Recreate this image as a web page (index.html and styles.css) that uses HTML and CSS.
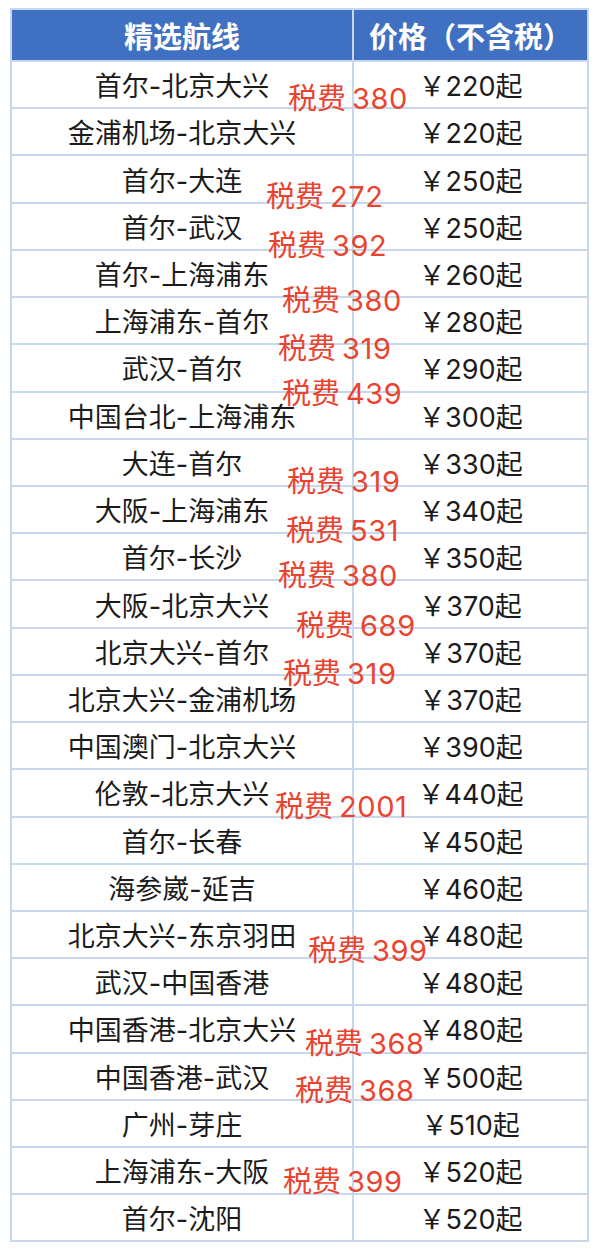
FILE: index.html
```html
<!DOCTYPE html>
<html lang="zh-CN">
<head>
<meta charset="utf-8">
<link rel="stylesheet" href="styles.css">
</head>
<body>
<div class="sheet">
  <table class="routes">
    <thead>
      <tr><th class="c1">精选航线</th><th class="c2">价格（不含税）</th></tr>
    </thead>
    <tbody>
      <tr><td>首尔-北京大兴</td><td>￥220起</td></tr>
      <tr><td>金浦机场-北京大兴</td><td>￥220起</td></tr>
      <tr><td>首尔-大连</td><td>￥250起</td></tr>
      <tr><td>首尔-武汉</td><td>￥250起</td></tr>
      <tr><td>首尔-上海浦东</td><td>￥260起</td></tr>
      <tr><td>上海浦东-首尔</td><td>￥280起</td></tr>
      <tr><td>武汉-首尔</td><td>￥290起</td></tr>
      <tr><td>中国台北-上海浦东</td><td>￥300起</td></tr>
      <tr><td>大连-首尔</td><td>￥330起</td></tr>
      <tr><td>大阪-上海浦东</td><td>￥340起</td></tr>
      <tr><td>首尔-长沙</td><td>￥350起</td></tr>
      <tr><td>大阪-北京大兴</td><td>￥370起</td></tr>
      <tr><td>北京大兴-首尔</td><td>￥370起</td></tr>
      <tr><td>北京大兴-金浦机场</td><td>￥370起</td></tr>
      <tr><td>中国澳门-北京大兴</td><td>￥390起</td></tr>
      <tr><td>伦敦-北京大兴</td><td>￥440起</td></tr>
      <tr><td>首尔-长春</td><td>￥450起</td></tr>
      <tr><td>海参崴-延吉</td><td>￥460起</td></tr>
      <tr><td>北京大兴-东京羽田</td><td>￥480起</td></tr>
      <tr><td>武汉-中国香港</td><td>￥480起</td></tr>
      <tr><td>中国香港-北京大兴</td><td>￥480起</td></tr>
      <tr><td>中国香港-武汉</td><td>￥500起</td></tr>
      <tr><td>广州-芽庄</td><td>￥510起</td></tr>
      <tr><td>上海浦东-大阪</td><td>￥520起</td></tr>
      <tr><td>首尔-沈阳</td><td>￥520起</td></tr>
    </tbody>
  </table>

  <span class="tax" style="left:288px;top:84px">税费<span class="n">380</span></span>
  <span class="tax" style="left:266px;top:182px">税费<span class="n">272</span></span>
  <span class="tax" style="left:268px;top:231px">税费<span class="n">392</span></span>
  <span class="tax" style="left:282px;top:286px">税费<span class="n">380</span></span>
  <span class="tax" style="left:278px;top:334px">税费<span class="n">319</span></span>
  <span class="tax" style="left:282px;top:379px">税费<span class="n">439</span></span>
  <span class="tax" style="left:287px;top:467px">税费<span class="n">319</span></span>
  <span class="tax" style="left:286px;top:516px">税费<span class="n">531</span></span>
  <span class="tax" style="left:278px;top:561px">税费<span class="n">380</span></span>
  <span class="tax" style="left:296px;top:611px">税费<span class="n">689</span></span>
  <span class="tax" style="left:283px;top:659px">税费<span class="n">319</span></span>
  <span class="tax" style="left:275px;top:792px">税费<span class="n">2001</span></span>
  <span class="tax" style="left:308px;top:936px">税费<span class="n">399</span></span>
  <span class="tax" style="left:305px;top:1029px">税费<span class="n">368</span></span>
  <span class="tax" style="left:295px;top:1076px">税费<span class="n">368</span></span>
  <span class="tax" style="left:283px;top:1167px">税费<span class="n">399</span></span>
</div>
</body>
</html>
```

FILE: styles.css
```css
html, body {
  margin: 0;
  padding: 0;
  background: #ffffff;
}

.sheet {
  position: relative;
  width: 600px;
  height: 1251px;
  padding: 8px 11px 0 10px;
  box-sizing: border-box;
  font-family: "Inter", "Noto Sans CJK SC", sans-serif;
}

.routes {
  width: 579px;
  border-collapse: collapse;
  table-layout: fixed;
  border: 2px solid #c9d7ec;
}

.routes th,
.routes td {
  border: 2px solid #c9d7ec;
  text-align: center;
  padding: 0;
}

.routes th {
  height: 50px;
  background: #3f70c2;
  color: #ffffff;
  font-weight: 700;
  font-size: 29px;
}

.routes th.c1 { width: 340px; }

.routes td {
  height: 45.22px;
  color: #1b1b1b;
  font-size: 27px;
  font-weight: 400;
}

.tax {
  position: absolute;
  color: #ea4330;
  font-size: 29px;
  line-height: 1;
  white-space: nowrap;
  font-family: "Inter", "Noto Sans CJK SC", sans-serif;
}

.tax .n {
  margin-left: 6px;
  letter-spacing: 0.6px;
}
```
